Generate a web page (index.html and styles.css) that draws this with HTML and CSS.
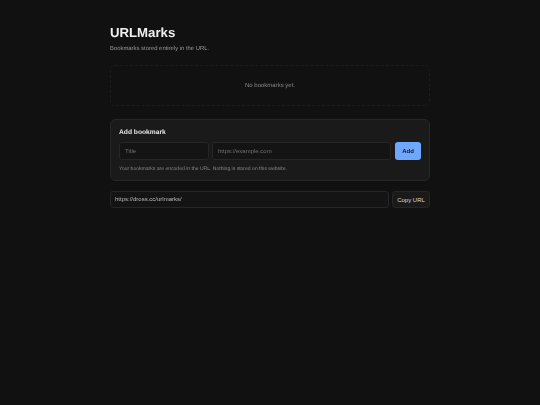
FILE: index.html
```html
<!DOCTYPE html>
<html>
<head>
    <title>URLMarks</title>
    <link rel="stylesheet" href="styles.css">
</head>
<body>
    <div class="container">
        <h1>URLMarks</h1>
        <p class="subtitle">Bookmarks stored entirely in the URL.</p>

        <div class="empty">No bookmarks yet.</div>

        <div class="add-card">
            <h2>Add bookmark</h2>
            <div class="add-row">
                <input type="text" class="title-input" placeholder="Title">
                <input type="text" class="url-input" placeholder="https://example.com">
                <button class="add-btn">Add</button>
            </div>
            <p class="note">Your bookmarks are encoded in the URL. Nothing is stored on this website.</p>
        </div>

        <div class="share-row">
            <input type="text" class="share-input" value="https://dross.cc/urlmarks/">
            <button class="copy-btn">Copy URL</button>
        </div>
    </div>
</body>
</html>
```

FILE: styles.css
```css
* {
    box-sizing: border-box;
}

html, body {
    margin: 0;
    height: 100%;
}

body {
    background: #111;
    color: #e8e8e8;
    font-family: "Liberation Sans", Arial, sans-serif;
    text-rendering: geometricPrecision;
}

.container {
    width: 320px;
    margin: 0 auto;
    padding-top: 25px;
    filter: blur(0.35px);
}

h1 {
    margin: 0;
    font-size: 13.2px;
    line-height: 16px;
    font-weight: 700;
    color: #f0f0f0;
}

.subtitle {
    margin: 4px 0 0;
    font-size: 5.9px;
    line-height: 8px;
    color: #999;
}

.empty {
    margin-top: 12px;
    height: 41px;
    display: flex;
    align-items: center;
    justify-content: center;
    border: 1px dashed #1c1c1c;
    border-radius: 5px;
    font-size: 6px;
    color: #888;
}

.add-card {
    margin-top: 13px;
    padding: 8px 8px 8px 8px;
    height: 62px;
    background: #1a1a1a;
    border: 1px solid #262626;
    border-radius: 5px;
}

h2 {
    margin: 0;
    font-size: 6.7px;
    line-height: 9px;
    font-weight: 700;
    color: #e8e8e8;
}

.add-row {
    display: flex;
    gap: 3px;
    margin-top: 5px;
}

input {
    height: 18px;
    padding: 0 4px 1px 5px;
    background: #141414;
    border: 1px solid #262626;
    border-radius: 3px;
    font-family: inherit;
    font-size: 6px;
    color: #bbb;
    outline: none;
}

input::placeholder {
    color: #707070;
}

.title-input {
    width: 90px;
}

.url-input {
    flex: 1;
    min-width: 0;
}

.add-btn {
    width: 26px;
    height: 18px;
    margin-left: 1px;
    padding: 0;
    background: #6ea8fe;
    color: #0f0f0f;
    border: none;
    border-radius: 3px;
    font-family: inherit;
    font-size: 6px;
    font-weight: 700;
}

.note {
    margin: 6px 0 0;
    font-size: 5.05px;
    line-height: 6px;
    color: #888;
}

.share-row {
    display: flex;
    gap: 3px;
    margin-top: 10px;
}

.share-input {
    flex: 1;
    min-width: 0;
    height: 17px;
    padding-left: 4px;
}

.copy-btn {
    width: 38px;
    height: 17px;
    padding: 0;
    background: #1a1a1a;
    color: #ddd;
    border: 1px solid #262626;
    border-radius: 3px;
    font-family: inherit;
    font-size: 6px;
    font-weight: 500;
}
```
